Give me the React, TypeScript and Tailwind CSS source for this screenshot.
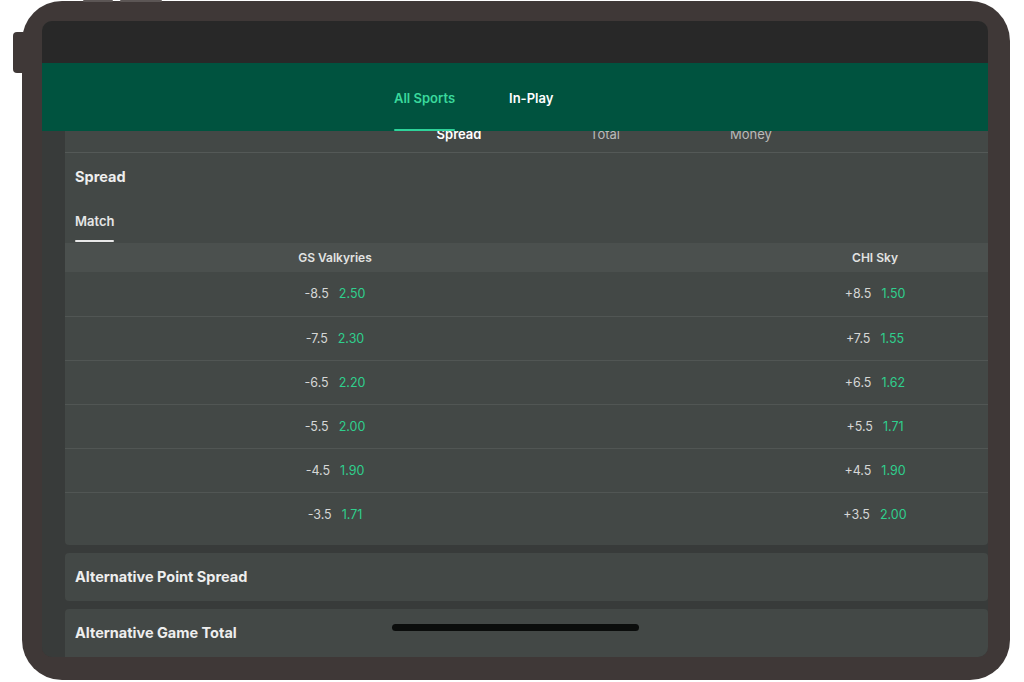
import React from 'react';

const rows = [
  { l: '-8.5', lo: '2.50', r: '+8.5', ro: '1.50' },
  { l: '-7.5', lo: '2.30', r: '+7.5', ro: '1.55' },
  { l: '-6.5', lo: '2.20', r: '+6.5', ro: '1.62' },
  { l: '-5.5', lo: '2.00', r: '+5.5', ro: '1.71' },
  { l: '-4.5', lo: '1.90', r: '+4.5', ro: '1.90' },
  { l: '-3.5', lo: '1.71', r: '+3.5', ro: '2.00' },
];

const Odd: React.FC<{ line: string; odd: string }> = ({ line, odd }) => (
  <div className="w-[540px] shrink-0 flex items-center justify-center gap-[10px] text-[12.5px] pt-[1px]">
    <span className="text-[#d6d7d6]">{line}</span>
    <span className="text-[#2fcf8d]">{odd}</span>
  </div>
);

const App: React.FC = () => {
  return (
    <div className="w-[1024px] h-[682px] bg-white relative overflow-hidden font-['Inter',sans-serif]">
      {/* Tablet frame */}
      <div className="ml-[22px] mt-[1px] w-[988px] h-[679px] rounded-[40px] bg-[#3f3837] relative pt-[20px] pl-[20px]">
        {/* hardware buttons */}
        <div className="absolute left-[-9px] top-[31px] w-[10px] h-[41px] rounded-l-[4px] bg-[#3f3837]" />
        <div className="absolute left-[61px] top-[-1px] w-[30px] h-[2px] rounded-full bg-[#5c5655]" />
        <div className="absolute left-[98px] top-[-1px] w-[42px] h-[2px] rounded-full bg-[#5c5655]" />

        {/* Screen */}
        <div className="w-[946px] h-[636px] rounded-[10px] overflow-hidden bg-[#383b3a] flex flex-col relative">
          {/* Status bar */}
          <div className="h-[42px] bg-[#282828] shrink-0" />

          {/* Top nav */}
          <div className="h-[68px] bg-[#00533f] shrink-0 flex pl-[352px] pt-[5px] gap-[54px] relative z-10">
            <div className="flex flex-col">
              <div className="flex-1 flex items-center text-[13px] font-semibold text-[#3ad89c]">All Sports</div>
              <div className="h-[2px] bg-[#2ed39a] rounded-full" />
            </div>
            <div className="flex flex-col">
              <div className="flex-1 flex items-center text-[13px] font-semibold text-white">In-Play</div>
              <div className="h-[2px]" />
            </div>
          </div>

          {/* Body */}
          <div className="flex-1 flex">
            <div className="w-[23px] shrink-0 bg-[#383b3a]" />
            <div className="flex-1 flex flex-col gap-[8px] min-w-0">
              {/* Spread card */}
              <div className="bg-[#434846] rounded-b-[4px] pb-[9px] shrink-0">
                <div className="h-[22px] overflow-hidden border-b border-[#545957] flex items-end pl-[321px]">
                  <div className="w-[146px] h-full flex flex-col justify-end items-center">
                    <div className="leading-[16px] text-[13px] font-semibold text-white">Spread</div>
                    <div className="mt-[10px] h-[2px] w-[45px] bg-[#d9bb5b]" />
                  </div>
                  <div className="w-[146px] h-full flex flex-col justify-end items-center">
                    <div className="leading-[16px] text-[13px] text-[#b9bcbb]">Total</div>
                    <div className="mt-[10px] h-[2px]" />
                  </div>
                  <div className="w-[146px] h-full flex flex-col justify-end items-center">
                    <div className="leading-[16px] text-[13px] text-[#b9bcbb]">Money</div>
                    <div className="mt-[10px] h-[2px]" />
                  </div>
                </div>

                <div className="pt-[14px] px-[10px]">
                  <div className="text-[14.5px] leading-[20px] font-bold text-[#eeeeee]">Spread</div>
                  <div className="mt-[25px] inline-flex flex-col">
                    <div className="text-[13px] leading-[18px] font-semibold text-[#e6e6e6]">Match</div>
                    <div className="mt-[10px] h-[2px] bg-[#e8e8e8] rounded-full" />
                  </div>
                </div>

                <div className="mt-[1px] h-[29px] bg-[#4b504e] flex overflow-hidden text-[12px] font-semibold text-[#e2e3e2]">
                  <div className="w-[540px] shrink-0 flex items-center justify-center">GS Valkyries</div>
                  <div className="w-[540px] shrink-0 flex items-center justify-center">CHI Sky</div>
                </div>

                {rows.map((r, i) => (
                  <div
                    key={i}
                    className={`h-[44px] flex overflow-hidden ${i > 0 ? 'border-t border-[#515654]' : ''}`}
                  >
                    <Odd line={r.l} odd={r.lo} />
                    <Odd line={r.r} odd={r.ro} />
                  </div>
                ))}
              </div>

              <div className="h-[48px] shrink-0 bg-[#434846] rounded-[4px] flex items-center px-[10px] text-[14.5px] font-bold text-[#eeeeee]">
                Alternative Point Spread
              </div>
              <div className="flex-1 bg-[#434846] rounded-t-[4px] flex items-center px-[10px] text-[14.5px] font-bold text-[#eeeeee]">
                Alternative Game Total
              </div>
            </div>
          </div>

          {/* Home indicator */}
          <div className="absolute left-[350px] bottom-[26px] w-[247px] h-[7px] rounded-full bg-[#0b0d0c] z-20" />
        </div>
      </div>
    </div>
  );
};

export default App;
